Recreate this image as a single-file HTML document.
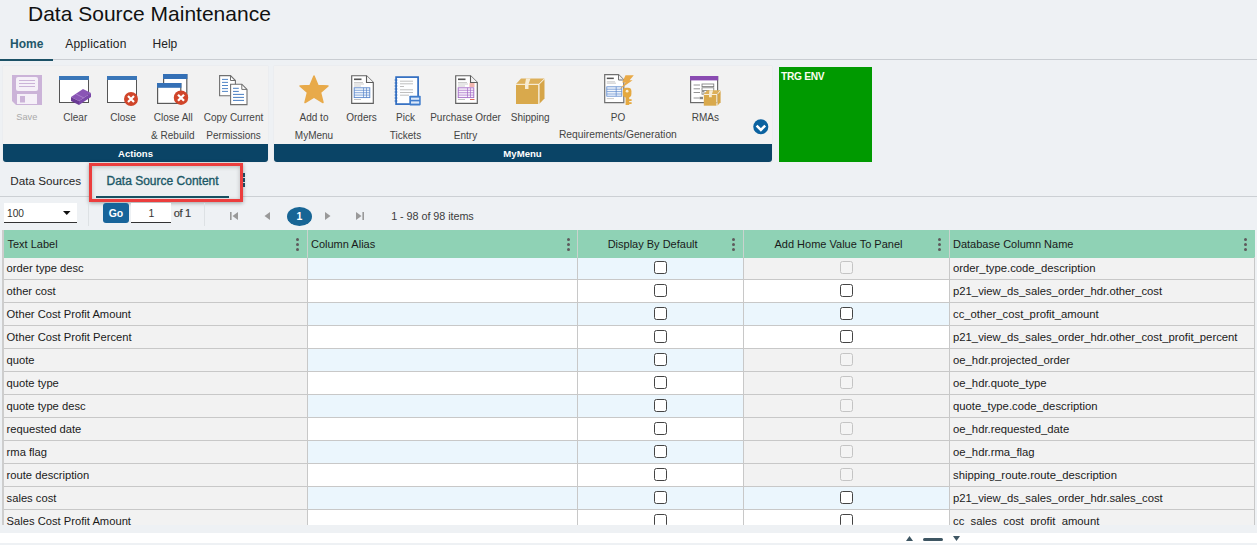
<!DOCTYPE html>
<html><head><meta charset="utf-8"><title>Data Source Maintenance</title>
<style>
html,body{margin:0;padding:0;}
body{width:1257px;height:545px;overflow:hidden;position:relative;background:#eef1f4;font-family:"Liberation Sans", sans-serif;}
.t{position:absolute;white-space:nowrap;}
.b{position:absolute;}
svg.b{overflow:visible;}
</style></head><body>
<div class="t" style="left:28.00px;top:3.02px;font-size:21px;line-height:21px;color:#111;">Data Source Maintenance</div>
<div class="b" style="left:0px;top:59px;width:1257px;height:1px;background:#c9cdd2;"></div>
<div class="b" style="left:0px;top:58.6px;width:53px;height:2.2px;background:#1b5166;"></div>
<div class="t" style="left:10.00px;top:37.64px;font-size:12px;line-height:12px;color:#22576a;font-weight:bold;">Home</div>
<div class="t" style="left:65.20px;top:38.04px;font-size:12px;line-height:12px;color:#222;letter-spacing:0.25px;">Application</div>
<div class="t" style="left:152.60px;top:38.04px;font-size:12px;line-height:12px;color:#222;">Help</div>
<div class="b" style="left:3px;top:65.5px;width:265px;height:96px;background:#f2f2f2;box-shadow:0 0 1px #d8d8d8;"></div>
<div class="b" style="left:274px;top:65.5px;width:498px;height:96px;background:#f2f2f2;box-shadow:0 0 1px #d8d8d8;"></div>
<div class="b" style="left:3px;top:144px;width:265px;height:18px;background:#0a4466;border-radius:0 0 3px 3px;"></div>
<div class="b" style="left:274px;top:144px;width:498px;height:18px;background:#0a4466;border-radius:0 0 3px 3px;"></div>
<div class="t" style="left:-14.50px;width:300px;text-align:center;top:149.26px;font-size:9.5px;line-height:9.5px;color:#ffffff;font-weight:bold;">Actions</div>
<div class="t" style="left:372.50px;width:300px;text-align:center;top:149.17px;font-size:9.6px;line-height:9.6px;color:#ffffff;font-weight:bold;">MyMenu</div>
<div class="t" style="left:-123.20px;width:300px;text-align:center;top:113.41px;font-size:9.2px;line-height:9.2px;color:#a9a9a9;">Save</div>
<div class="t" style="left:-74.70px;width:300px;text-align:center;top:112.73px;font-size:10px;line-height:10px;color:#444;">Clear</div>
<div class="t" style="left:-27.00px;width:300px;text-align:center;top:112.73px;font-size:10px;line-height:10px;color:#444;">Close</div>
<div class="t" style="left:23.30px;width:300px;text-align:center;top:112.73px;font-size:10px;line-height:10px;color:#444;">Close All</div>
<div class="t" style="left:22.80px;width:300px;text-align:center;top:130.73px;font-size:10px;line-height:10px;color:#444;">&amp; Rebuild</div>
<div class="t" style="left:83.50px;width:300px;text-align:center;top:112.73px;font-size:10px;line-height:10px;color:#444;">Copy Current</div>
<div class="t" style="left:83.60px;width:300px;text-align:center;top:130.73px;font-size:10px;line-height:10px;color:#444;">Permissions</div>
<div class="t" style="left:164.00px;width:300px;text-align:center;top:112.73px;font-size:10px;line-height:10px;color:#444;">Add to</div>
<div class="t" style="left:164.00px;width:300px;text-align:center;top:130.73px;font-size:10px;line-height:10px;color:#444;">MyMenu</div>
<div class="t" style="left:211.50px;width:300px;text-align:center;top:112.73px;font-size:10px;line-height:10px;color:#444;">Orders</div>
<div class="t" style="left:255.50px;width:300px;text-align:center;top:112.73px;font-size:10px;line-height:10px;color:#444;">Pick</div>
<div class="t" style="left:255.50px;width:300px;text-align:center;top:130.73px;font-size:10px;line-height:10px;color:#444;">Tickets</div>
<div class="t" style="left:315.50px;width:300px;text-align:center;top:112.73px;font-size:10px;line-height:10px;color:#444;">Purchase Order</div>
<div class="t" style="left:315.50px;width:300px;text-align:center;top:130.73px;font-size:10px;line-height:10px;color:#444;">Entry</div>
<div class="t" style="left:380.20px;width:300px;text-align:center;top:112.73px;font-size:10px;line-height:10px;color:#444;">Shipping</div>
<div class="t" style="left:468.00px;width:300px;text-align:center;top:112.73px;font-size:10px;line-height:10px;color:#444;">PO</div>
<div class="t" style="left:467.90px;width:300px;text-align:center;top:130.48px;font-size:10.3px;line-height:10.3px;color:#444;">Requirements/Generation</div>
<div class="t" style="left:555.40px;width:300px;text-align:center;top:112.73px;font-size:10px;line-height:10px;color:#444;">RMAs</div>
<svg class="b" style="left:12px;top:75px" width="30" height="30" viewBox="0 0 30 30">
<path d="M0 0 H30 V30 H4 L0 26 Z" fill="#cbb3d8"/>
<rect x="4" y="2" width="22" height="14" rx="2" fill="#f5f0f8"/>
<rect x="7" y="5" width="16" height="1" fill="#cbb3d8"/><rect x="7" y="8" width="16" height="1" fill="#cbb3d8"/><rect x="7" y="11" width="16" height="1" fill="#cbb3d8"/>
<rect x="5" y="19" width="20" height="10" fill="#f5f0f8"/>
<rect x="8" y="21" width="5" height="6.5" fill="#cbb3d8"/>
</svg>
<svg class="b" style="left:59px;top:76px" width="33" height="30" viewBox="0 0 33 30">
<rect x="0.5" y="0.5" width="29" height="26" fill="#fff" stroke="#555" stroke-width="1"/>
<rect x="0" y="0" width="30" height="4" fill="#3a76b8"/>
<path d="M12 21 L24 13 L32 17 L20 25 Z" fill="#8a55b5"/>
<path d="M12 21 L20 25 L20 29 L12 25 Z" fill="#6a3a95"/>
<path d="M20 25 L32 17 L32 21 L20 29 Z" fill="#7a47a8"/>
<path d="M17 18 L25 22" stroke="#b28ad2" stroke-width="0.8"/>
</svg>
<svg class="b" style="left:107px;top:76px" width="32" height="30" viewBox="0 0 32 30">
<rect x="0.5" y="0.5" width="29" height="26" fill="#fff" stroke="#555" stroke-width="1"/>
<rect x="0" y="0" width="30" height="4" fill="#3a76b8"/>
<circle cx="24" cy="23" r="7" fill="#d0452a"/>
<path d="M21 20 L27 26 M27 20 L21 26" stroke="#fff" stroke-width="2.2"/>
</svg>
<svg class="b" style="left:157px;top:74px" width="32" height="32" viewBox="0 0 32 32">
<rect x="6.6" y="0.6" width="23.2" height="24" fill="#fff" stroke="#5a5a5a" stroke-width="1.2"/>
<rect x="6" y="0" width="24.4" height="5" fill="#3470b6"/>
<rect x="0.6" y="9.6" width="23.2" height="19.8" fill="#fff" stroke="#5a5a5a" stroke-width="1.2"/>
<rect x="0" y="9" width="24.4" height="4.8" fill="#3470b6"/>
<circle cx="24" cy="23.7" r="7.2" fill="#d0452a"/>
<path d="M21 20.7 L27 26.7 M27 20.7 L21 26.7" stroke="#fff" stroke-width="2.3"/>
</svg>
<svg class="b" style="left:218px;top:75px" width="30" height="31" viewBox="0 0 30 31">
<path d="M1.6 0.6 H12.5 L17.4 5.5 V20.8 H1.6 Z" fill="#fff" stroke="#707070" stroke-width="1.1"/>
<path d="M12.5 0.6 V5.5 H17.4" fill="none" stroke="#707070" stroke-width="1"/>
<path d="M4 4.4 H10 M4 7.4 H10 M4 10.5 H10 M4 13.6 H10 M4 16.4 H10" fill="none" stroke="#3f78c0" stroke-width="0.9"/>
<path d="M12.6 9.2 H23.8 L29 14.4 V29.6 H12.6 Z" fill="#fff" stroke="#707070" stroke-width="1.1"/>
<path d="M23.8 9.2 V14.4 H29" fill="none" stroke="#707070" stroke-width="1"/>
<path d="M15 13.3 H20.8 M15 16.4 H20.8 M15 19.4 H26 M15 22.4 H26 M15 25.4 H26" fill="none" stroke="#3f78c0" stroke-width="0.95"/>
</svg>
<svg class="b" style="left:299px;top:75px" width="30" height="29" viewBox="0 0 30 29">
<path d="M15 1 L19 10.5 L29 11 L21.5 17.5 L24 27.5 L15 22 L6 27.5 L8.5 17.5 L1 11 L11 10.5 Z" fill="#e8aa4a" stroke="#e8aa4a" stroke-width="1.5" stroke-linejoin="round"/>
</svg>
<svg class="b" style="left:351px;top:75px" width="23" height="29" viewBox="0 0 23 29">
<path d="M0.7 0.7 H15.5 L22.3 7.5 V28.3 H0.7 Z" fill="#fff" stroke="#606060" stroke-width="1.15"/>
<path d="M15.5 0.7 V7.5 H22.3" fill="#f4f4f4" stroke="#5a5a5a" stroke-width="1.1"/>
<rect x="3" y="3.5" width="7.5" height="1.6" fill="#555"/>
<path d="M3 7.5 H12 M3 9 H13 M3 11 H10" fill="none" stroke="#b8b8b8" stroke-width="0.7"/>
<rect x="3.2" y="12.8" width="15.6" height="9.8" fill="#f4f8fd" stroke="#5a86cc" stroke-width="0.9"/>
<path d="M3.2 15.3 H18.8 M3.2 17.7 H18.8 M3.2 20.1 H18.8 M12.5 12.8 V22.6 M15.5 12.8 V22.6" stroke="#5a86cc" stroke-width="0.7"/>
<path d="M3 24.5 H10" stroke="#b0b0b0" stroke-width="0.8"/>

</svg>
<svg class="b" style="left:394px;top:75.5px" width="30" height="31" viewBox="0 0 30 31">
<rect x="2.1" y="1.1" width="22" height="27" fill="#fdfeff" stroke="#2f6cc0" stroke-width="1.7"/>
<path d="M0.6 4 H3.4 M0.6 7 H3.4 M0.6 10 H3.4 M0.6 13 H3.4 M0.6 16 H3.4 M0.6 19 H3.4 M0.6 22 H3.4 M0.6 25 H3.4" stroke="#2f6cc0" stroke-width="1.2"/>
<path d="M6 5.2 H19 M6 7.8 H19 M6 10.5 H10 M6 13.8 H19 M6 16.5 H19 M6 19.2 H15" fill="none" stroke="#b8b8b8" stroke-width="0.9"/>
<rect x="15.3" y="19.8" width="11.4" height="9.6" rx="0.8" fill="#3f7ccc"/>
<rect x="17" y="21.6" width="8.2" height="2.2" fill="#dce8f8"/>
<rect x="17" y="25.4" width="8.2" height="2.2" fill="#dce8f8"/>
</svg>
<svg class="b" style="left:455px;top:75px" width="23" height="29" viewBox="0 0 23 29">
<path d="M0.7 0.7 H15.5 L22.3 7.5 V28.3 H0.7 Z" fill="#fff" stroke="#606060" stroke-width="1.15"/>
<path d="M15.5 0.7 V7.5 H22.3" fill="#f4f4f4" stroke="#5a5a5a" stroke-width="1.1"/>
<rect x="3" y="3.5" width="7.5" height="1.6" fill="#555"/>
<path d="M3 7.5 H12 M3 9 H13 M3 11 H10" fill="none" stroke="#b8b8b8" stroke-width="0.7"/>
<rect x="3.2" y="12.8" width="15.6" height="9.8" fill="#f8f2fb" stroke="#a46cc6" stroke-width="0.9"/>
<path d="M3.2 15.3 H18.8 M3.2 17.7 H18.8 M3.2 20.1 H18.8 M12.5 12.8 V22.6 M15.5 12.8 V22.6" stroke="#a46cc6" stroke-width="0.7"/>
<path d="M3 24.5 H10" stroke="#b0b0b0" stroke-width="0.8"/>
<path d="M14.5 9 H19.5 M14.5 11 H19.5 M15 24.5 H19.5" fill="none" stroke="#e05a4a" stroke-width="0.9"/>
</svg>
<svg class="b" style="left:516px;top:78px" width="29" height="27" viewBox="0 0 29 27">
<path d="M0 6 L5 0.5 H28.5 L23 6 Z" fill="#ddb05a"/>
<path d="M0 6.6 H22.4 V26 H0 Z" fill="#d9a94c"/>
<path d="M23.2 6.3 L28.5 1 V20.5 L23.2 26 Z" fill="#d6a548"/>
<path d="M0 6.3 H23 L28.5 0.8" fill="none" stroke="#fbf3e2" stroke-width="0.9"/>
<path d="M23 6.3 V26" stroke="#fbf3e2" stroke-width="0.9"/>
<path d="M10 0.5 H14.5 L12.5 6.3 V11 H9 V6.3 Z" fill="#f7ecd4"/>
</svg>
<svg class="b" style="left:604px;top:74px" width="31" height="32" viewBox="0 0 31 32">
<path d="M0.7 0.7 H14.5 L19.8 6 V28.6 H0.7 Z" fill="#fff" stroke="#707070" stroke-width="1.2"/>
<path d="M14.5 0.7 V6 H19.8" fill="#f0f0f0" stroke="#707070" stroke-width="1"/>
<rect x="2.8" y="3.6" width="7" height="1.5" fill="#555"/>
<path d="M2.8 7.8 H11 M2.8 9.2 H12" fill="none" stroke="#b5b5b5" stroke-width="0.7"/>
<rect x="2.8" y="12.8" width="15" height="9.4" fill="#f4f8fd" stroke="#5a86cc" stroke-width="0.8"/>
<path d="M2.8 15.2 H17.8 M2.8 17.6 H17.8 M2.8 20 H17.8 M12.2 12.8 V22.2" fill="none" stroke="#5a86cc" stroke-width="0.7"/>
<path d="M2.8 24.6 H10" fill="none" stroke="#b5b5b5" stroke-width="0.7"/>
<path d="M21.5 1.2 H29.8 L25.6 6.2 H28.6 L15.4 15.4 L21.6 8.6 H18.2 Z" fill="#e9aa48"/>
<rect x="18.8" y="13.8" width="8.6" height="9.6" rx="3.4" fill="#e5a940"/>
<circle cx="23.1" cy="17.2" r="1.4" fill="#f8eed8"/>
<rect x="21.6" y="22" width="3.6" height="9" fill="#e5a940"/>
<rect x="25" y="25.2" width="2.6" height="1.8" fill="#e5a940"/><rect x="25" y="28.2" width="2.6" height="1.8" fill="#e5a940"/>
</svg>
<svg class="b" style="left:690px;top:76px" width="32" height="31" viewBox="0 0 32 31">
<rect x="0.6" y="0.6" width="27" height="26" fill="#fff" stroke="#6a6a6a" stroke-width="1.2"/>
<rect x="0" y="0" width="28.2" height="4.4" fill="#8a4bb2"/>
<path d="M3.6 9 H10 M3.6 12.8 H10 M3.6 16.5 H10 M3.6 22 H9" fill="none" stroke="#888" stroke-width="0.9"/>
<rect x="12" y="8" width="11.8" height="2.6" fill="none" stroke="#777" stroke-width="0.8"/>
<rect x="12" y="11.8" width="11.8" height="2.6" fill="none" stroke="#777" stroke-width="0.8"/>
<rect x="12" y="15.6" width="2" height="2.6" fill="none" stroke="#777" stroke-width="0.8"/>
<rect x="9.5" y="20.8" width="3.5" height="2.4" fill="#888"/>
<path d="M13.5 18.2 L17.3 14.2 H30.6 L27 18.2 Z" fill="#ddb05a"/>
<path d="M13.8 18.8 H26.6 V29.7 H13.8 Z" fill="#d9a94c"/>
<path d="M27.3 18.6 L30.6 14.8 V26.2 L27.3 29.7 Z" fill="#d6a548"/>
<path d="M13.8 18.5 H27 L30.6 14.5 M27 18.5 V29.7" fill="none" stroke="#fbf3e2" stroke-width="0.8"/>
<path d="M19.4 14.2 H23.2 L21.8 18.5 V21.2 H19 V18.5 Z" fill="#f7ecd4"/>
</svg>
<svg class="b" style="left:752.5px;top:118.6px" width="16" height="16" viewBox="0 0 16 16">
<circle cx="7.8" cy="7.75" r="7.55" fill="#0b62a0"/>
<path d="M3.6 6.6 L7.9 10.9 L12.2 6.6" fill="none" stroke="#fff" stroke-width="2.5" stroke-linecap="butt" stroke-linejoin="miter"/>
</svg>
<div class="b" style="left:779px;top:67px;width:93px;height:95px;background:#009a00;"></div>
<div class="t" style="left:781.00px;top:72.17px;font-size:10.2px;line-height:10.2px;color:#fbfdf0;font-weight:bold;letter-spacing:-0.3px;">TRG ENV</div>
<div class="b" style="left:0px;top:196px;width:1257px;height:1px;background:#ccd0d4;"></div>
<div class="t" style="left:10.30px;top:174.90px;font-size:11.7px;line-height:11.7px;color:#262626;">Data Sources</div>
<div class="b" style="left:89px;top:163px;width:154px;height:39px;border:3px solid #ec3d3d;box-sizing:border-box;box-shadow:0 1px 4px rgba(0,0,0,0.35), inset 0 1px 4px rgba(0,0,0,0.22);background:#eceff1;"></div>
<div class="b" style="left:96px;top:195.8px;width:133px;height:2px;background:#174f60;"></div>
<div class="t" style="left:106.50px;top:174.64px;font-size:12px;line-height:12px;color:#1b5866;-webkit-text-stroke:0.35px #1b5866;">Data Source Content</div>
<div class="b" style="left:243px;top:173.2px;width:2.2px;height:3.6px;background:#1f4a60;"></div>
<div class="b" style="left:243px;top:178.2px;width:2.2px;height:3.6px;background:#1f4a60;"></div>
<div class="b" style="left:243px;top:183.2px;width:2.2px;height:3.6px;background:#1f4a60;"></div>
<div class="b" style="left:4px;top:203px;width:73px;height:19px;background:#fff;"></div>
<div class="b" style="left:4px;top:222px;width:73px;height:1px;background:#333;"></div>
<div class="t" style="left:7.00px;top:208.97px;font-size:10.2px;line-height:10.2px;color:#333;">100</div>
<svg class="b" style="left:63px;top:211px" width="8" height="4" viewBox="0 0 8 4"><path d="M0 0 H7.5 L3.75 4 Z" fill="#111"/></svg>
<div class="b" style="left:88px;top:203px;width:1px;height:23px;background:#dde1e4;"></div>
<div class="b" style="left:103px;top:203px;width:26px;height:19.5px;background:#17649a;border-radius:3px;"></div>
<div class="t" style="left:-34.00px;width:300px;text-align:center;top:207.91px;font-size:10.5px;line-height:10.5px;color:#fff;font-weight:bold;">Go</div>
<div class="b" style="left:131px;top:203px;width:40px;height:19px;background:#fff;"></div>
<div class="b" style="left:131px;top:222px;width:40px;height:1px;background:#333;"></div>
<div class="t" style="left:1.50px;width:300px;text-align:center;top:207.91px;font-size:10.5px;line-height:10.5px;color:#333;">1</div>
<div class="t" style="left:173.70px;top:208.19px;font-size:11px;line-height:11px;color:#3a3a3a;letter-spacing:-0.3px;-webkit-text-stroke:0.2px #3a3a3a;">of 1</div>
<div class="b" style="left:204px;top:203px;width:1px;height:23px;background:#dde1e4;"></div>
<svg class="b" style="left:230px;top:212px" width="8" height="8" viewBox="0 0 8 8"><rect x="0" y="0" width="1.6" height="8" fill="#999"/><path d="M8 0 V8 L2.5 4 Z" fill="#999"/></svg>
<svg class="b" style="left:264px;top:212px" width="6" height="8" viewBox="0 0 6 8"><path d="M6 0 V8 L0.5 4 Z" fill="#999"/></svg>
<div class="b" style="left:286.8px;top:206.6px;width:25.3px;height:19.3px;background:#176595;border-radius:50%;"></div>
<div class="t" style="left:149.30px;width:300px;text-align:center;top:210.81px;font-size:10.5px;line-height:10.5px;color:#fff;font-weight:bold;">1</div>
<svg class="b" style="left:324.5px;top:212px" width="6" height="8" viewBox="0 0 6 8"><path d="M0 0 V8 L5.5 4 Z" fill="#999"/></svg>
<svg class="b" style="left:355.5px;top:212px" width="8" height="8" viewBox="0 0 8 8"><path d="M0 0 V8 L5.5 4 Z" fill="#999"/><rect x="6.4" y="0" width="1.6" height="8" fill="#999"/></svg>
<div class="t" style="left:391.20px;top:210.56px;font-size:10.8px;line-height:10.8px;color:#3c3c3c;letter-spacing:-0.05px;">1 - 98 of 98 items</div>
<div class="b" style="left:0;top:0;width:1257px;height:525px;overflow:hidden;">
<div class="b" style="left:4px;top:257px;width:303px;height:23px;background:#f2f2f2;"></div>
<div class="b" style="left:307px;top:257px;width:270px;height:23px;background:#ebf6fd;"></div>
<div class="b" style="left:577px;top:257px;width:166px;height:23px;background:#ebf6fd;"></div>
<div class="b" style="left:743px;top:257px;width:206px;height:23px;background:#f2f2f2;"></div>
<div class="b" style="left:949px;top:257px;width:305px;height:23px;background:#f2f2f2;"></div>
<div class="b" style="left:4px;top:279px;width:1250px;height:1px;background:#c8c8c8;"></div>
<div class="t" style="left:6.60px;top:262.82px;font-size:11.2px;line-height:11.2px;color:#1a1a1a;">order type desc</div>
<div class="t" style="left:953.00px;top:262.73px;font-size:11.3px;line-height:11.3px;color:#1a1a1a;">order_type.code_description</div>
<div class="b" style="left:654px;top:261px;width:13px;height:13px;border:1.5px solid #444;border-radius:2.5px;box-sizing:border-box;background:#fff;"></div>
<div class="b" style="left:840px;top:261px;width:13px;height:13px;border:1.2px solid #c4c4c4;border-radius:2.5px;box-sizing:border-box;background:#f4f4f4;"></div>
<div class="b" style="left:4px;top:280px;width:303px;height:23px;background:#f2f2f2;"></div>
<div class="b" style="left:307px;top:280px;width:270px;height:23px;background:#ffffff;"></div>
<div class="b" style="left:577px;top:280px;width:166px;height:23px;background:#ffffff;"></div>
<div class="b" style="left:743px;top:280px;width:206px;height:23px;background:#ffffff;"></div>
<div class="b" style="left:949px;top:280px;width:305px;height:23px;background:#f2f2f2;"></div>
<div class="b" style="left:4px;top:302px;width:1250px;height:1px;background:#c8c8c8;"></div>
<div class="t" style="left:6.60px;top:285.82px;font-size:11.2px;line-height:11.2px;color:#1a1a1a;">other cost</div>
<div class="t" style="left:953.00px;top:285.73px;font-size:11.3px;line-height:11.3px;color:#1a1a1a;">p21_view_ds_sales_order_hdr.other_cost</div>
<div class="b" style="left:654px;top:284px;width:13px;height:13px;border:1.5px solid #444;border-radius:2.5px;box-sizing:border-box;background:#fff;"></div>
<div class="b" style="left:840px;top:284px;width:13px;height:13px;border:1.5px solid #444;border-radius:2.5px;box-sizing:border-box;background:#fff;"></div>
<div class="b" style="left:4px;top:303px;width:303px;height:23px;background:#f2f2f2;"></div>
<div class="b" style="left:307px;top:303px;width:270px;height:23px;background:#ebf6fd;"></div>
<div class="b" style="left:577px;top:303px;width:166px;height:23px;background:#ebf6fd;"></div>
<div class="b" style="left:743px;top:303px;width:206px;height:23px;background:#ebf6fd;"></div>
<div class="b" style="left:949px;top:303px;width:305px;height:23px;background:#f2f2f2;"></div>
<div class="b" style="left:4px;top:325px;width:1250px;height:1px;background:#c8c8c8;"></div>
<div class="t" style="left:6.60px;top:308.82px;font-size:11.2px;line-height:11.2px;color:#1a1a1a;">Other Cost Profit Amount</div>
<div class="t" style="left:953.00px;top:308.73px;font-size:11.3px;line-height:11.3px;color:#1a1a1a;">cc_other_cost_profit_amount</div>
<div class="b" style="left:654px;top:307px;width:13px;height:13px;border:1.5px solid #444;border-radius:2.5px;box-sizing:border-box;background:#fff;"></div>
<div class="b" style="left:840px;top:307px;width:13px;height:13px;border:1.5px solid #444;border-radius:2.5px;box-sizing:border-box;background:#fff;"></div>
<div class="b" style="left:4px;top:326px;width:303px;height:23px;background:#f2f2f2;"></div>
<div class="b" style="left:307px;top:326px;width:270px;height:23px;background:#ffffff;"></div>
<div class="b" style="left:577px;top:326px;width:166px;height:23px;background:#ffffff;"></div>
<div class="b" style="left:743px;top:326px;width:206px;height:23px;background:#ffffff;"></div>
<div class="b" style="left:949px;top:326px;width:305px;height:23px;background:#f2f2f2;"></div>
<div class="b" style="left:4px;top:348px;width:1250px;height:1px;background:#c8c8c8;"></div>
<div class="t" style="left:6.60px;top:331.82px;font-size:11.2px;line-height:11.2px;color:#1a1a1a;">Other Cost Profit Percent</div>
<div class="t" style="left:953.00px;top:331.73px;font-size:11.3px;line-height:11.3px;color:#1a1a1a;">p21_view_ds_sales_order_hdr.other_cost_profit_percent</div>
<div class="b" style="left:654px;top:330px;width:13px;height:13px;border:1.5px solid #444;border-radius:2.5px;box-sizing:border-box;background:#fff;"></div>
<div class="b" style="left:840px;top:330px;width:13px;height:13px;border:1.5px solid #444;border-radius:2.5px;box-sizing:border-box;background:#fff;"></div>
<div class="b" style="left:4px;top:349px;width:303px;height:23px;background:#f2f2f2;"></div>
<div class="b" style="left:307px;top:349px;width:270px;height:23px;background:#ebf6fd;"></div>
<div class="b" style="left:577px;top:349px;width:166px;height:23px;background:#ebf6fd;"></div>
<div class="b" style="left:743px;top:349px;width:206px;height:23px;background:#f2f2f2;"></div>
<div class="b" style="left:949px;top:349px;width:305px;height:23px;background:#f2f2f2;"></div>
<div class="b" style="left:4px;top:371px;width:1250px;height:1px;background:#c8c8c8;"></div>
<div class="t" style="left:6.60px;top:354.82px;font-size:11.2px;line-height:11.2px;color:#1a1a1a;">quote</div>
<div class="t" style="left:953.00px;top:354.73px;font-size:11.3px;line-height:11.3px;color:#1a1a1a;">oe_hdr.projected_order</div>
<div class="b" style="left:654px;top:353px;width:13px;height:13px;border:1.5px solid #444;border-radius:2.5px;box-sizing:border-box;background:#fff;"></div>
<div class="b" style="left:840px;top:353px;width:13px;height:13px;border:1.2px solid #c4c4c4;border-radius:2.5px;box-sizing:border-box;background:#f4f4f4;"></div>
<div class="b" style="left:4px;top:372px;width:303px;height:23px;background:#f2f2f2;"></div>
<div class="b" style="left:307px;top:372px;width:270px;height:23px;background:#ffffff;"></div>
<div class="b" style="left:577px;top:372px;width:166px;height:23px;background:#ffffff;"></div>
<div class="b" style="left:743px;top:372px;width:206px;height:23px;background:#f2f2f2;"></div>
<div class="b" style="left:949px;top:372px;width:305px;height:23px;background:#f2f2f2;"></div>
<div class="b" style="left:4px;top:394px;width:1250px;height:1px;background:#c8c8c8;"></div>
<div class="t" style="left:6.60px;top:377.82px;font-size:11.2px;line-height:11.2px;color:#1a1a1a;">quote type</div>
<div class="t" style="left:953.00px;top:377.73px;font-size:11.3px;line-height:11.3px;color:#1a1a1a;">oe_hdr.quote_type</div>
<div class="b" style="left:654px;top:376px;width:13px;height:13px;border:1.5px solid #444;border-radius:2.5px;box-sizing:border-box;background:#fff;"></div>
<div class="b" style="left:840px;top:376px;width:13px;height:13px;border:1.2px solid #c4c4c4;border-radius:2.5px;box-sizing:border-box;background:#f4f4f4;"></div>
<div class="b" style="left:4px;top:395px;width:303px;height:23px;background:#f2f2f2;"></div>
<div class="b" style="left:307px;top:395px;width:270px;height:23px;background:#ebf6fd;"></div>
<div class="b" style="left:577px;top:395px;width:166px;height:23px;background:#ebf6fd;"></div>
<div class="b" style="left:743px;top:395px;width:206px;height:23px;background:#f2f2f2;"></div>
<div class="b" style="left:949px;top:395px;width:305px;height:23px;background:#f2f2f2;"></div>
<div class="b" style="left:4px;top:417px;width:1250px;height:1px;background:#c8c8c8;"></div>
<div class="t" style="left:6.60px;top:400.82px;font-size:11.2px;line-height:11.2px;color:#1a1a1a;">quote type desc</div>
<div class="t" style="left:953.00px;top:400.73px;font-size:11.3px;line-height:11.3px;color:#1a1a1a;">quote_type.code_description</div>
<div class="b" style="left:654px;top:399px;width:13px;height:13px;border:1.5px solid #444;border-radius:2.5px;box-sizing:border-box;background:#fff;"></div>
<div class="b" style="left:840px;top:399px;width:13px;height:13px;border:1.2px solid #c4c4c4;border-radius:2.5px;box-sizing:border-box;background:#f4f4f4;"></div>
<div class="b" style="left:4px;top:418px;width:303px;height:23px;background:#f2f2f2;"></div>
<div class="b" style="left:307px;top:418px;width:270px;height:23px;background:#ffffff;"></div>
<div class="b" style="left:577px;top:418px;width:166px;height:23px;background:#ffffff;"></div>
<div class="b" style="left:743px;top:418px;width:206px;height:23px;background:#f2f2f2;"></div>
<div class="b" style="left:949px;top:418px;width:305px;height:23px;background:#f2f2f2;"></div>
<div class="b" style="left:4px;top:440px;width:1250px;height:1px;background:#c8c8c8;"></div>
<div class="t" style="left:6.60px;top:423.82px;font-size:11.2px;line-height:11.2px;color:#1a1a1a;">requested date</div>
<div class="t" style="left:953.00px;top:423.73px;font-size:11.3px;line-height:11.3px;color:#1a1a1a;">oe_hdr.requested_date</div>
<div class="b" style="left:654px;top:422px;width:13px;height:13px;border:1.5px solid #444;border-radius:2.5px;box-sizing:border-box;background:#fff;"></div>
<div class="b" style="left:840px;top:422px;width:13px;height:13px;border:1.2px solid #c4c4c4;border-radius:2.5px;box-sizing:border-box;background:#f4f4f4;"></div>
<div class="b" style="left:4px;top:441px;width:303px;height:23px;background:#f2f2f2;"></div>
<div class="b" style="left:307px;top:441px;width:270px;height:23px;background:#ebf6fd;"></div>
<div class="b" style="left:577px;top:441px;width:166px;height:23px;background:#ebf6fd;"></div>
<div class="b" style="left:743px;top:441px;width:206px;height:23px;background:#f2f2f2;"></div>
<div class="b" style="left:949px;top:441px;width:305px;height:23px;background:#f2f2f2;"></div>
<div class="b" style="left:4px;top:463px;width:1250px;height:1px;background:#c8c8c8;"></div>
<div class="t" style="left:6.60px;top:446.82px;font-size:11.2px;line-height:11.2px;color:#1a1a1a;">rma flag</div>
<div class="t" style="left:953.00px;top:446.73px;font-size:11.3px;line-height:11.3px;color:#1a1a1a;">oe_hdr.rma_flag</div>
<div class="b" style="left:654px;top:445px;width:13px;height:13px;border:1.5px solid #444;border-radius:2.5px;box-sizing:border-box;background:#fff;"></div>
<div class="b" style="left:840px;top:445px;width:13px;height:13px;border:1.2px solid #c4c4c4;border-radius:2.5px;box-sizing:border-box;background:#f4f4f4;"></div>
<div class="b" style="left:4px;top:464px;width:303px;height:23px;background:#f2f2f2;"></div>
<div class="b" style="left:307px;top:464px;width:270px;height:23px;background:#ffffff;"></div>
<div class="b" style="left:577px;top:464px;width:166px;height:23px;background:#ffffff;"></div>
<div class="b" style="left:743px;top:464px;width:206px;height:23px;background:#f2f2f2;"></div>
<div class="b" style="left:949px;top:464px;width:305px;height:23px;background:#f2f2f2;"></div>
<div class="b" style="left:4px;top:486px;width:1250px;height:1px;background:#c8c8c8;"></div>
<div class="t" style="left:6.60px;top:469.82px;font-size:11.2px;line-height:11.2px;color:#1a1a1a;">route description</div>
<div class="t" style="left:953.00px;top:469.73px;font-size:11.3px;line-height:11.3px;color:#1a1a1a;">shipping_route.route_description</div>
<div class="b" style="left:654px;top:468px;width:13px;height:13px;border:1.5px solid #444;border-radius:2.5px;box-sizing:border-box;background:#fff;"></div>
<div class="b" style="left:840px;top:468px;width:13px;height:13px;border:1.2px solid #c4c4c4;border-radius:2.5px;box-sizing:border-box;background:#f4f4f4;"></div>
<div class="b" style="left:4px;top:487px;width:303px;height:23px;background:#f2f2f2;"></div>
<div class="b" style="left:307px;top:487px;width:270px;height:23px;background:#ebf6fd;"></div>
<div class="b" style="left:577px;top:487px;width:166px;height:23px;background:#ebf6fd;"></div>
<div class="b" style="left:743px;top:487px;width:206px;height:23px;background:#ebf6fd;"></div>
<div class="b" style="left:949px;top:487px;width:305px;height:23px;background:#f2f2f2;"></div>
<div class="b" style="left:4px;top:509px;width:1250px;height:1px;background:#c8c8c8;"></div>
<div class="t" style="left:6.60px;top:492.82px;font-size:11.2px;line-height:11.2px;color:#1a1a1a;">sales cost</div>
<div class="t" style="left:953.00px;top:492.73px;font-size:11.3px;line-height:11.3px;color:#1a1a1a;">p21_view_ds_sales_order_hdr.sales_cost</div>
<div class="b" style="left:654px;top:491px;width:13px;height:13px;border:1.5px solid #444;border-radius:2.5px;box-sizing:border-box;background:#fff;"></div>
<div class="b" style="left:840px;top:491px;width:13px;height:13px;border:1.5px solid #444;border-radius:2.5px;box-sizing:border-box;background:#fff;"></div>
<div class="b" style="left:4px;top:510px;width:303px;height:23px;background:#f2f2f2;"></div>
<div class="b" style="left:307px;top:510px;width:270px;height:23px;background:#ffffff;"></div>
<div class="b" style="left:577px;top:510px;width:166px;height:23px;background:#ffffff;"></div>
<div class="b" style="left:743px;top:510px;width:206px;height:23px;background:#ffffff;"></div>
<div class="b" style="left:949px;top:510px;width:305px;height:23px;background:#f2f2f2;"></div>
<div class="b" style="left:4px;top:532px;width:1250px;height:1px;background:#c8c8c8;"></div>
<div class="t" style="left:6.60px;top:515.82px;font-size:11.2px;line-height:11.2px;color:#1a1a1a;">Sales Cost Profit Amount</div>
<div class="t" style="left:953.00px;top:515.73px;font-size:11.3px;line-height:11.3px;color:#1a1a1a;">cc_sales_cost_profit_amount</div>
<div class="b" style="left:654px;top:514px;width:13px;height:13px;border:1.5px solid #444;border-radius:2.5px;box-sizing:border-box;background:#fff;"></div>
<div class="b" style="left:840px;top:514px;width:13px;height:13px;border:1.5px solid #444;border-radius:2.5px;box-sizing:border-box;background:#fff;"></div>
</div>
<div class="b" style="left:4px;top:230px;width:1251px;height:27.6px;background:#8fd2b5;"></div>
<div class="t" style="left:7.50px;top:238.69px;font-size:11px;line-height:11px;color:#1a1a1a;">Text Label</div>
<div class="t" style="left:311.00px;top:238.69px;font-size:11px;line-height:11px;color:#1a1a1a;">Column Alias</div>
<div class="t" style="left:502.60px;width:300px;text-align:center;top:238.69px;font-size:11px;line-height:11px;color:#1a1a1a;">Display By Default</div>
<div class="t" style="left:688.50px;width:300px;text-align:center;top:238.69px;font-size:11px;line-height:11px;color:#1a1a1a;">Add Home Value To Panel</div>
<div class="t" style="left:953.00px;top:238.69px;font-size:11px;line-height:11px;color:#1a1a1a;">Database Column Name</div>
<div class="b" style="left:296.0px;top:237.8px;width:3px;height:3px;background:#5e5a5c;border-radius:50%;"></div>
<div class="b" style="left:296.0px;top:242.8px;width:3px;height:3px;background:#5e5a5c;border-radius:50%;"></div>
<div class="b" style="left:296.0px;top:247.8px;width:3px;height:3px;background:#5e5a5c;border-radius:50%;"></div>
<div class="b" style="left:566.5px;top:237.8px;width:3px;height:3px;background:#5e5a5c;border-radius:50%;"></div>
<div class="b" style="left:566.5px;top:242.8px;width:3px;height:3px;background:#5e5a5c;border-radius:50%;"></div>
<div class="b" style="left:566.5px;top:247.8px;width:3px;height:3px;background:#5e5a5c;border-radius:50%;"></div>
<div class="b" style="left:732.0px;top:237.8px;width:3px;height:3px;background:#5e5a5c;border-radius:50%;"></div>
<div class="b" style="left:732.0px;top:242.8px;width:3px;height:3px;background:#5e5a5c;border-radius:50%;"></div>
<div class="b" style="left:732.0px;top:247.8px;width:3px;height:3px;background:#5e5a5c;border-radius:50%;"></div>
<div class="b" style="left:937.8px;top:237.8px;width:3px;height:3px;background:#5e5a5c;border-radius:50%;"></div>
<div class="b" style="left:937.8px;top:242.8px;width:3px;height:3px;background:#5e5a5c;border-radius:50%;"></div>
<div class="b" style="left:937.8px;top:247.8px;width:3px;height:3px;background:#5e5a5c;border-radius:50%;"></div>
<div class="b" style="left:1243.7px;top:237.8px;width:3px;height:3px;background:#5e5a5c;border-radius:50%;"></div>
<div class="b" style="left:1243.7px;top:242.8px;width:3px;height:3px;background:#5e5a5c;border-radius:50%;"></div>
<div class="b" style="left:1243.7px;top:247.8px;width:3px;height:3px;background:#5e5a5c;border-radius:50%;"></div>
<div class="b" style="left:307px;top:257px;width:1px;height:268px;background:#c8c8c8;"></div>
<div class="b" style="left:307px;top:230px;width:1px;height:27px;background:#c9d3ce;"></div>
<div class="b" style="left:577px;top:257px;width:1px;height:268px;background:#c8c8c8;"></div>
<div class="b" style="left:577px;top:230px;width:1px;height:27px;background:#c9d3ce;"></div>
<div class="b" style="left:743px;top:257px;width:1px;height:268px;background:#c8c8c8;"></div>
<div class="b" style="left:743px;top:230px;width:1px;height:27px;background:#c9d3ce;"></div>
<div class="b" style="left:949px;top:257px;width:1px;height:268px;background:#c8c8c8;"></div>
<div class="b" style="left:949px;top:230px;width:1px;height:27px;background:#c9d3ce;"></div>
<div class="b" style="left:2px;top:230px;width:2px;height:295px;background:#cdcdcd;"></div>
<div class="b" style="left:1254px;top:257px;width:1px;height:268px;background:#c8c8c8;"></div>
<div class="b" style="left:0px;top:525px;width:1257px;height:8px;background:#eef1f4;"></div>
<div class="b" style="left:0px;top:533px;width:1257px;height:10px;background:#fff;"></div>
<div class="b" style="left:0px;top:543px;width:1257px;height:2px;background:#eef1f4;"></div>
<svg class="b" style="left:906px;top:536px" width="7" height="5" viewBox="0 0 7 5"><path d="M0 5 L3.5 0 L7 5 Z" fill="#3e5663"/></svg>
<div class="b" style="left:923px;top:538px;width:20px;height:3px;background:#3e5663;border-radius:1.5px;"></div>
<svg class="b" style="left:953px;top:536px" width="7" height="5" viewBox="0 0 7 5"><path d="M0 0 L3.5 5 L7 0 Z" fill="#3e5663"/></svg>
</body></html>
